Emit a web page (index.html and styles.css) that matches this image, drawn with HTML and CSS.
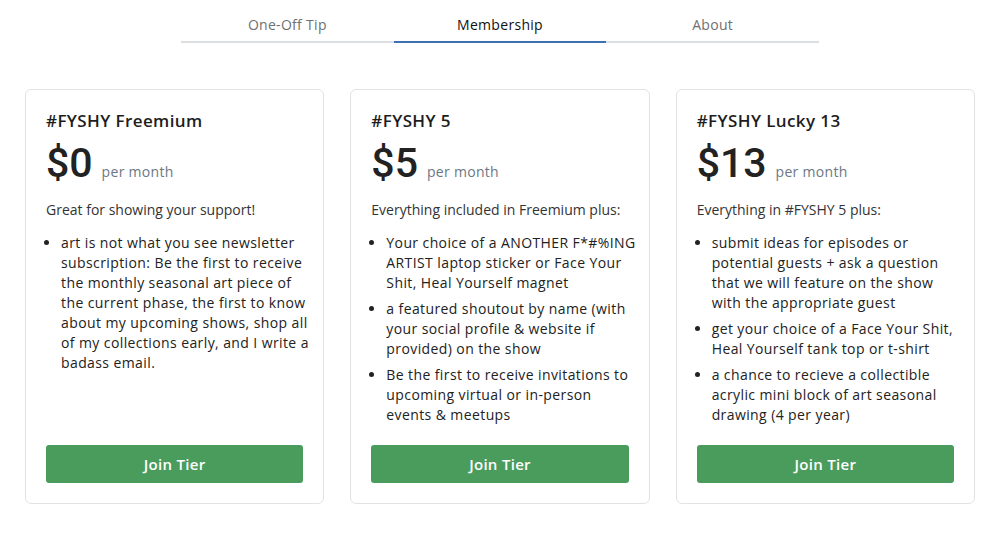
FILE: index.html
```
<!DOCTYPE html>
<html>
<head>
<meta charset="utf-8">
<link rel="stylesheet" href="styles.css">
</head>
<body>
<nav class="tabs">
  <a class="tab">One-Off Tip</a>
  <a class="tab active">Membership</a>
  <a class="tab">About</a>
</nav>
<main class="tiers">
  <section class="card">
    <h2 class="title">#FYSHY Freemium</h2>
    <div class="price"><span class="amount">$0</span><span class="per">per month</span></div>
    <p class="desc">Great for showing your support!</p>
    <ul class="perks">
      <li>art is not what you see newsletter<br>subscription: Be the first to receive<br>the monthly seasonal art piece of<br>the current phase, the first to know<br>about my upcoming shows, shop all<br>of my collections early, and I write a<br>badass email.</li>
    </ul>
    <button class="join">Join Tier</button>
  </section>
  <section class="card">
    <h2 class="title">#FYSHY 5</h2>
    <div class="price"><span class="amount">$5</span><span class="per">per month</span></div>
    <p class="desc">Everything included in Freemium plus:</p>
    <ul class="perks">
      <li>Your choice of a ANOTHER F*#%ING<br>ARTIST laptop sticker or Face Your<br>Shit, Heal Yourself magnet</li>
      <li>a featured shoutout by name (with<br>your social profile &amp; website if<br>provided) on the show</li>
      <li>Be the first to receive invitations to<br>upcoming virtual or in-person<br>events &amp; meetups</li>
    </ul>
    <button class="join">Join Tier</button>
  </section>
  <section class="card">
    <h2 class="title">#FYSHY Lucky 13</h2>
    <div class="price"><span class="amount">$13</span><span class="per">per month</span></div>
    <p class="desc">Everything in #FYSHY 5 plus:</p>
    <ul class="perks">
      <li>submit ideas for episodes or<br>potential guests + ask a question<br>that we will feature on the show<br>with the appropriate guest</li>
      <li>get your choice of a Face Your Shit,<br>Heal Yourself tank top or t-shirt</li>
      <li>a chance to recieve a collectible<br>acrylic mini block of art seasonal<br>drawing (4 per year)</li>
    </ul>
    <button class="join">Join Tier</button>
  </section>
</main>
</body>
</html>
```
FILE: styles.css
```
* { box-sizing: border-box; }
body {
  margin: 0;
  background: #fff;
  font-family: "Open Sans", "DejaVu Sans", sans-serif;
  color: #222;
}
.tabs {
  width: 638px;
  margin: 0 auto;
  display: flex;
  border-bottom: 2px solid #dde0e3;
  padding-top: 15px;
}
.tab {
  flex: 1 1 0;
  text-align: center;
  font-size: 14px;
  line-height: 20px;
  color: #707070;
  padding-bottom: 6px;
  margin-bottom: -2px;
  border-bottom: 2px solid transparent;
  letter-spacing: 0.3px;
}
.tab.active {
  color: #111;
  font-weight: 500;
  border-bottom-color: #3d6fb4;
}
.tiers {
  display: flex;
  gap: 26px;
  padding: 46px 25px 0;
}
.card {
  flex: 1 1 0;
  min-width: 0;
  border: 1px solid #e2e2e2;
  border-radius: 6px;
  padding: 19px 20px 20px;
  height: 415px;
  display: flex;
  flex-direction: column;
}
.title {
  margin: 0;
  font-size: 17px;
  line-height: 24px;
  font-weight: 600;
  letter-spacing: 0.4px;
  color: #1d1d1d;
}
.price {
  display: flex;
  align-items: baseline;
  margin-top: 6px;
  height: 48px;
  line-height: 48px;
}
.amount {
  font-family: Roboto, "Liberation Sans", Arial, sans-serif;
  font-size: 41px;
  font-weight: 500;
  color: #222;
}
.per {
  font-size: 14px;
  color: #6b7784;
  margin-left: 9px;
  letter-spacing: 0.3px;
}
.desc {
  margin: 13px 0 0;
  font-size: 14px;
  line-height: 20px;
  color: #333;
}
.perks {
  margin: 13px 0 0;
  padding-left: 15px;
  font-size: 14px;
  line-height: 20px;
  letter-spacing: 0.4px;
  color: #222;
  font-weight: 500;
  white-space: nowrap;
}
.perks li { margin-bottom: 6px; }
.join {
  flex-shrink: 0;
  margin-top: auto;
  height: 38px;
  border: none;
  border-radius: 3px;
  background: #4a9c5d;
  color: #fff;
  font-family: inherit;
  font-size: 15px;
  font-weight: 600;
  letter-spacing: 0.3px;
}
```
